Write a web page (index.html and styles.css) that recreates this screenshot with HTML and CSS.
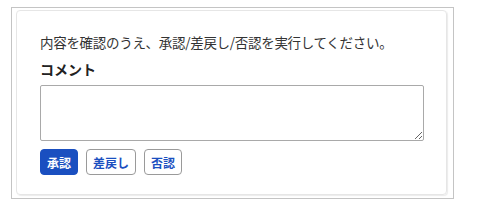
FILE: index.html
```html
<!DOCTYPE html>
<html lang="ja">
<head>
	<meta charset="UTF-8">
	<meta name="viewport" content="width=device-width, initial-scale=1.0">
	<title>承認</title>
	<link rel="stylesheet" href="styles.css">
</head>
<body>
	<div class="frame">
		<section class="card">
			<p class="card-text">内容を確認のうえ、承認/差戻し/否認を実行してください。</p>
			<form class="form" action="#">
				<label class="form-label" for="comment">コメント</label>
				<textarea class="form-textarea" id="comment" name="comment"></textarea>
				<div class="form-actions">
					<button class="btn btn-primary" type="button">承認</button>
					<button class="btn" type="button">差戻し</button>
					<button class="btn" type="button">否認</button>
				</div>
			</form>
		</section>
	</div>
</body>
</html>
```

FILE: styles.css
```css
* {
	box-sizing: border-box;
	margin: 0;
	padding: 0;
}

body {
	background: #fff;
	font-family: "Noto Sans CJK JP", "Noto Sans", sans-serif;
	color: #333;
}

.frame {
	width: 443px;
	height: 192px;
	margin: 7px 0 0 11px;
	border: 1px solid #c4c4c4;
	padding: 2px 6px 3px 4px;
}

.card {
	height: 100%;
	border: 1px solid #e6e6e6;
	border-radius: 4px;
	box-shadow: 1px 1px 1px rgba(0, 0, 0, 0.08);
	padding: 21px 22px 0 23px;
}

.card-text {
	font-size: 13.5px;
	letter-spacing: -0.3px;
	line-height: 20px;
}

.form-label {
	display: block;
	margin-top: 7px;
	font-size: 14px;
	font-weight: bold;
	line-height: 20px;
	color: #222;
}

.form-textarea {
	display: block;
	width: 100%;
	height: 56px;
	margin-top: 6px;
	border: 1px solid #a9a9a9;
	border-radius: 2px;
	font-family: inherit;
	font-size: 13px;
	padding: 4px 6px;
	resize: vertical;
}

.form-actions {
	display: flex;
	gap: 8px;
	margin-top: 8px;
}

.btn {
	height: 26px;
	padding: 0 6px;
	border: 1px solid #9a9a9a;
	border-radius: 4px;
	background: #fff;
	color: #1a4fc0;
	font-family: inherit;
	font-size: 12px;
	font-weight: bold;
	cursor: pointer;
}

.btn-primary {
	background: #1a4fc0;
	border-color: #1a4fc0;
	color: #fff;
}
```
